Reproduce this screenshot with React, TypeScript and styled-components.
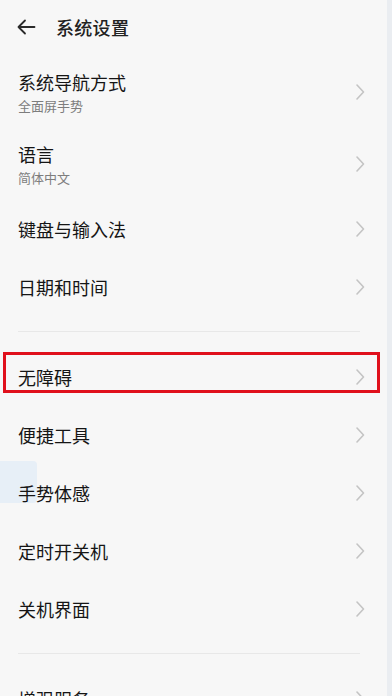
import React from "react";
import styled, { createGlobalStyle } from "styled-components";

type Item = {
    title: string;
    subtitle?: string;
    marked?: boolean;
};

const GlobalStyle = createGlobalStyle`
    html, body {
        margin: 0;
        padding: 0;
        background: #f7f7f7;
    }
    body {
        font-family: "Noto Sans CJK SC", "Noto Sans", sans-serif;
        color: #151515;
    }
`;

export const Screen = styled.div`
    position: relative;
    width: 392px;
    height: 696px;
    overflow: hidden;
    background: #f7f7f7;
    box-sizing: border-box;
    border-right: 5px solid #eaedf1;
`;

export const Header = styled.header`
    position: relative;
    height: 56px;
    padding: 0 0 2px 16px;
    box-sizing: border-box;
    display: flex;
    align-items: center;
    gap: 20px;
`;

export const Title = styled.h1`
    margin: 0;
    font-size: 18px;
    font-weight: 500;
    letter-spacing: 0.3px;
    color: #222;
`;

export const Section = styled.section`
    display: flex;
    flex-direction: column;
`;

export const Divider = styled.div`
    position: relative;
    height: 1px;
    margin: 15px 27px 16px 18px;
    background: #e8e8e8;
`;

export const Row = styled.div<{ $tall?: boolean }>`
    position: relative;
    height: ${(p) => (p.$tall ? "72px" : "58px")};
    padding: 0 22px 0 18px;
    display: flex;
    align-items: center;
    justify-content: space-between;
`;

export const Texts = styled.div`
    display: flex;
    flex-direction: column;
    gap: 2px;
`;

export const RowTitle = styled.span`
    font-size: 18px;
    line-height: 26px;
    color: #151515;
`;

export const RowSub = styled.span`
    font-size: 13px;
    line-height: 18px;
    color: #7d7d7d;
`;

export const Highlight = styled.div`
    position: absolute;
    left: 3px;
    right: 7px;
    top: 4px;
    height: 41px;
    box-sizing: border-box;
    border: 3px solid #e0101c;
    pointer-events: none;
`;

export const FloatBall = styled.div`
    position: absolute;
    left: 0;
    top: 461px;
    width: 37px;
    height: 42px;
    background: #e7eff7;
    border-radius: 0 4px 4px 0;
`;

const BackArrow = () => (
    <svg width="20" height="20" viewBox="0 0 20 20" fill="none">
        <path
            d="M18.5 10H2.5M9 3.5L2.5 10L9 16.5"
            stroke="#2a2a2a"
            strokeWidth="1.8"
            strokeLinecap="round"
            strokeLinejoin="round"
        />
    </svg>
);

const Chevron = () => (
    <svg width="10" height="18" viewBox="0 0 10 18" fill="none">
        <path
            d="M2 2L8.5 9L2 16"
            stroke="#c4c4c4"
            strokeWidth="1.6"
            strokeLinecap="round"
            strokeLinejoin="round"
        />
    </svg>
);

const groupOne: Item[] = [
    { title: "系统导航方式", subtitle: "全面屏手势" },
    { title: "语言", subtitle: "简体中文" },
    { title: "键盘与输入法" },
    { title: "日期和时间" },
];

const groupTwo: Item[] = [
    { title: "无障碍", marked: true },
    { title: "便捷工具" },
    { title: "手势体感" },
    { title: "定时开关机" },
    { title: "关机界面" },
];

const groupThree: Item[] = [{ title: "增强服务" }];

const SettingRow = ({ item }: { item: Item }) => (
    <Row $tall={!!item.subtitle}>
        <Texts>
            <RowTitle>{item.title}</RowTitle>
            {item.subtitle && <RowSub>{item.subtitle}</RowSub>}
        </Texts>
        <Chevron />
        {item.marked && <Highlight />}
    </Row>
);

export default function App() {
    return (
        <>
            <GlobalStyle />
            <Screen>
                {/* floating assistant ball, drawn under the list */}
                <FloatBall />
                <Header>
                    <BackArrow />
                    <Title>系统设置</Title>
                </Header>
                <Section>
                    {groupOne.map((it) => (
                        <SettingRow key={it.title} item={it} />
                    ))}
                </Section>
                <Divider />
                <Section>
                    {groupTwo.map((it) => (
                        <SettingRow key={it.title} item={it} />
                    ))}
                </Section>
                <Divider />
                <Section>
                    {groupThree.map((it) => (
                        <SettingRow key={it.title} item={it} />
                    ))}
                </Section>
            </Screen>
        </>
    );
}
